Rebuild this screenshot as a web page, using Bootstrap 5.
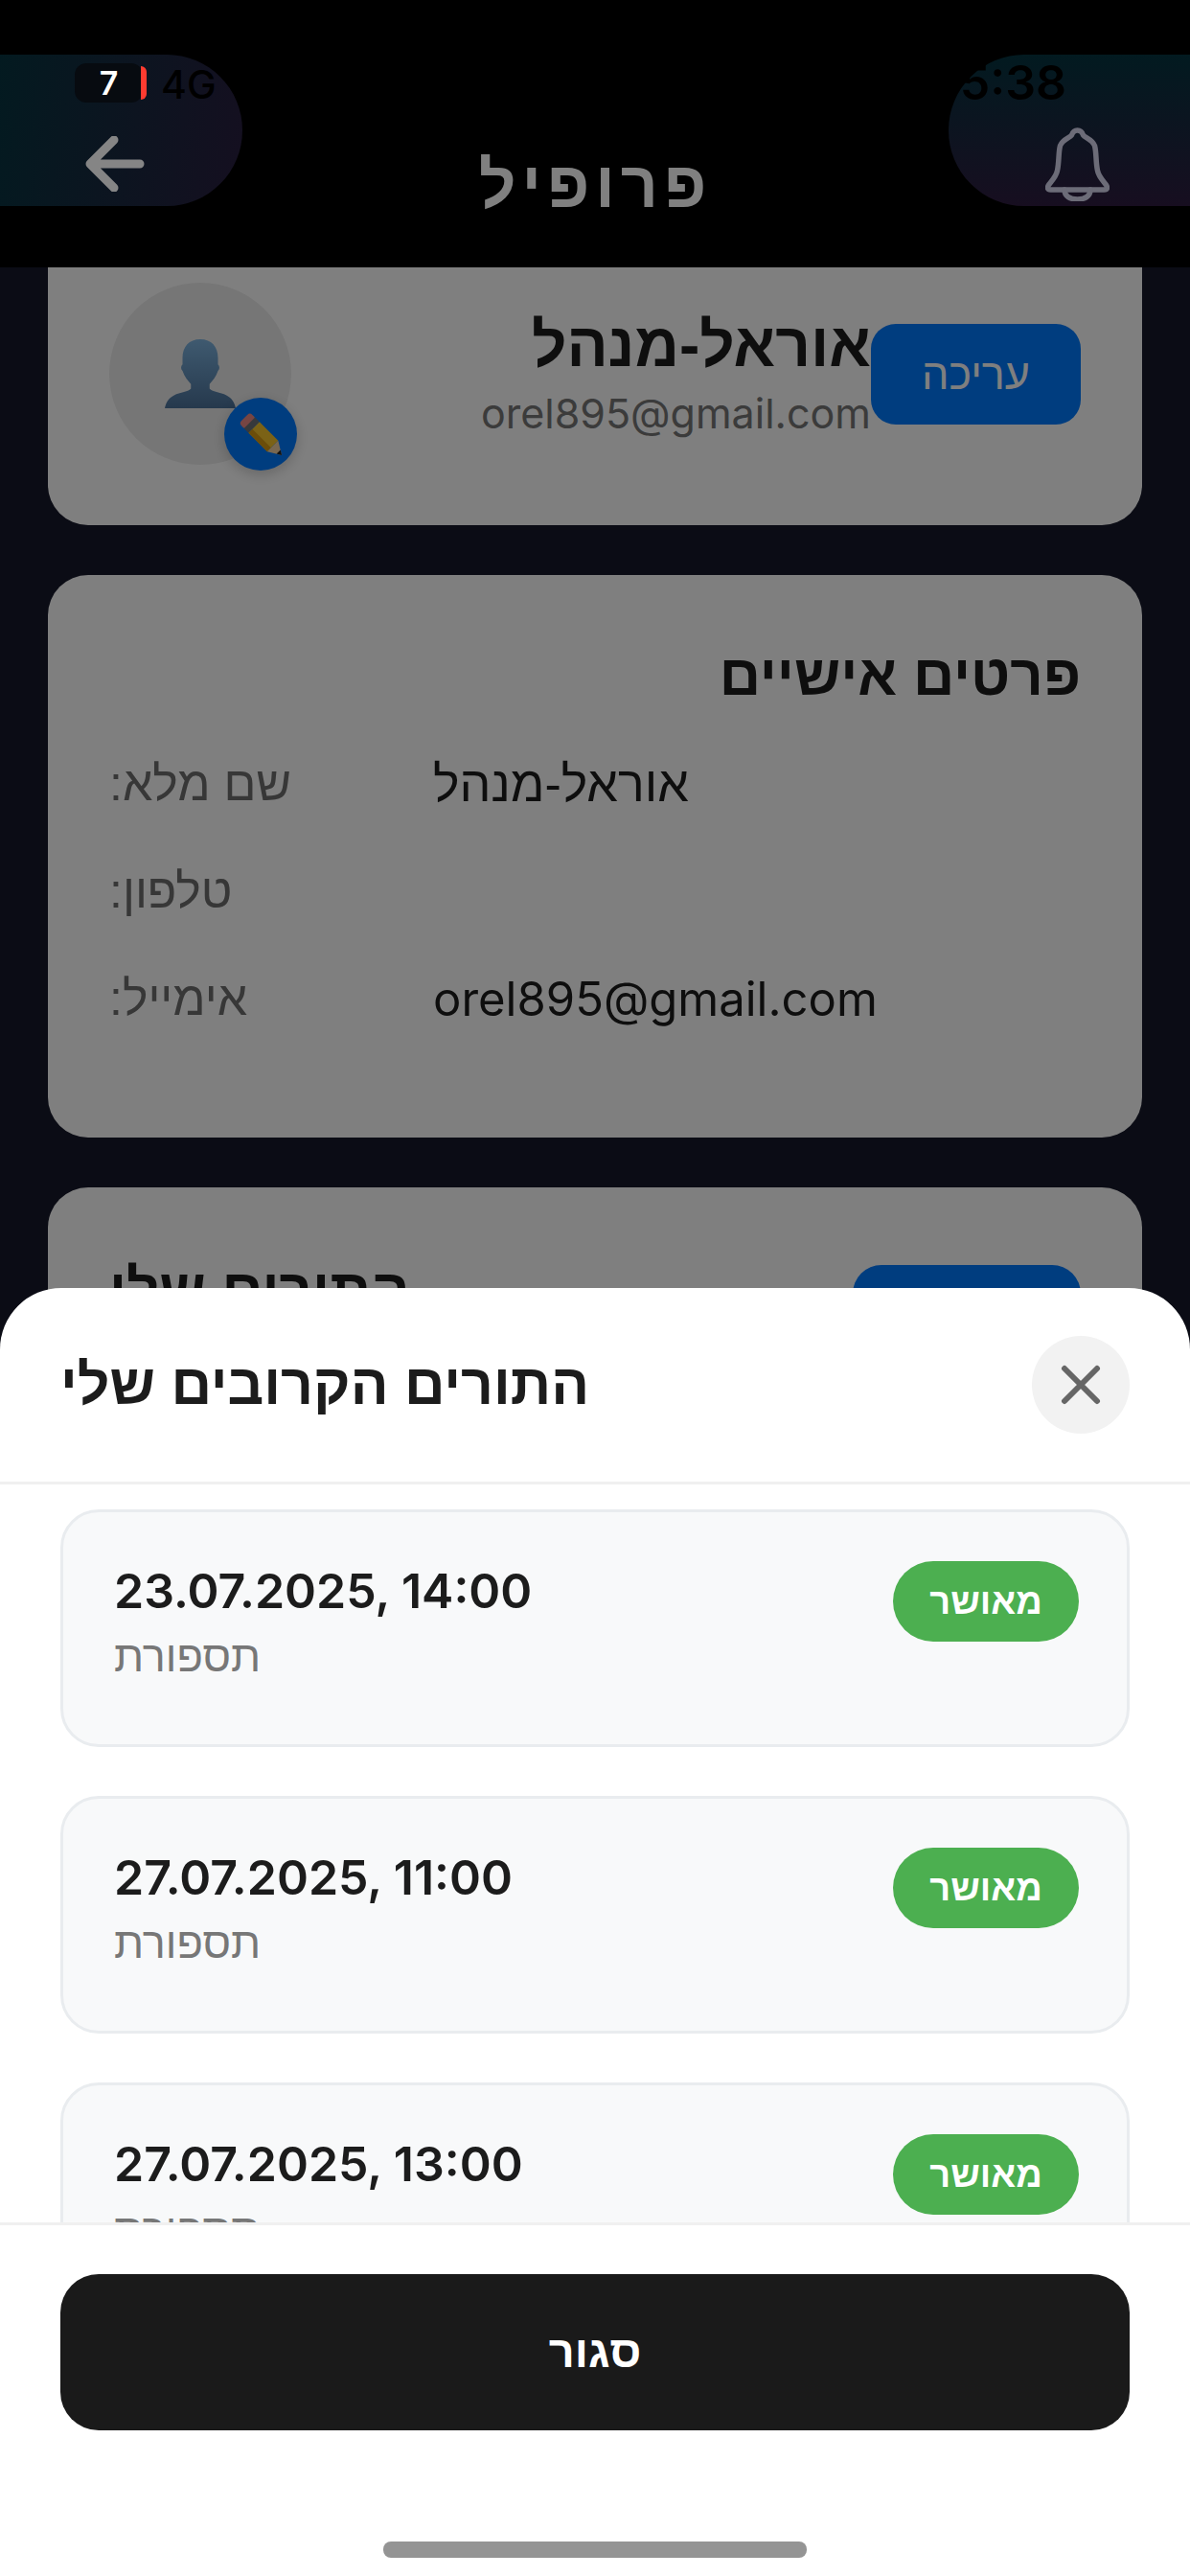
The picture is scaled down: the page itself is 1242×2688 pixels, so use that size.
<!DOCTYPE html>
<html lang="he" dir="rtl">
<head>
  <meta charset="UTF-8" />
  <title>פרופיל</title>
  <link href="https://cdn.jsdelivr.net/npm/bootstrap@5.3.3/dist/css/bootstrap.min.css" rel="stylesheet" />
  <style>
    html, body { margin: 0; height: 100%; }
    body {
      width: 1242px; height: 2688px; overflow: hidden;
      background: #16182a;
      font-family: "Liberation Sans", sans-serif;
      position: relative;
    }
    .latin-text { font-family: Inter, sans-serif; }
    /* top bar */
    .top-bar { height: 279px; background: #000; position: relative; z-index: 3; padding-top: 57px; }
    .top-pill { width: 253px; height: 158px; display: flex; align-items: center; padding-top: 70px; }
    .pill-right { background: linear-gradient(180deg, #021a20, #170e20); border-radius: 79px 0 0 79px; width: 252px; padding-right: 84px; }
    .pill-left { background: linear-gradient(100deg, #031a20, #150f20); border-radius: 0 79px 79px 0; padding-left: 89px; direction: ltr; }
    .top-title { color: #808080; font-size: 68px; font-weight: 700; letter-spacing: 6px; line-height: 1; margin-top: 101px; }
    .status-time, .status-net { position: absolute; color: #000; line-height: 1; direction: ltr; }
    .status-time { right: 129px; top: 61px; font-size: 50px; font-weight: 600; }
    .status-net { left: 168px; top: 68px; font-size: 41px; font-weight: 500; }
    .status-batt {
      position: absolute; left: 78px; top: 66px; width: 71px; height: 41px;
      border-radius: 12px; background: #070b10; color: #fff; font-size: 34px; font-weight: 600;
      display: flex; align-items: center; justify-content: center; direction: ltr;
    }
    .batt-red { position: absolute; left: 69px; top: 3px; width: 6px; height: 35px; background: #ff3b30; border-radius: 0 6px 6px 0; }
    /* page behind the sheet */
    .page-body { margin-top: -100px; padding: 0 50px; display: flex; flex-direction: column; gap: 52px; }
    .info-box { background: #fff; border-radius: 42px; padding: 64px; }
    .profile-box { height: 369px; padding-top: 116px; }
    .details-box { height: 587px; padding-top: 75px; }
    .details-box .box-title { margin-bottom: -4px; }
    .appts-box { height: 400px; padding-top: 81px; }
    .box-title { font-size: 60px; font-weight: 700; color: #1c1c1c; line-height: 1; }
    .edit-btn {
      width: 219px; height: 105px; margin-top: 43px; background: #007aff; color: #fff; border: 0; border-radius: 26px;
      font-size: 45px; flex-shrink: 0;
    }
    .user-block { margin-top: 33px; }
    .user-name { font-size: 64px; font-weight: 700; color: #1c1c1c; line-height: 1; }
    .user-mail { font-size: 43px; color: #777; line-height: 1; margin-top: 18px; }
    .avatar-wrap { position: relative; width: 190px; height: 190px; margin-right: auto; flex-shrink: 0; }
    .avatar-circle { width: 190px; height: 190px; border-radius: 50%; background: #ededed; display: flex; align-items: center; justify-content: center; }
    .avatar-badge {
      position: absolute; left: 120px; top: 120px; width: 76px; height: 76px; border-radius: 50%;
      background: #007aff; box-shadow: 0 4px 14px rgba(0,0,0,.2); display: flex; align-items: center; justify-content: center;
    }
    .detail-row { display: flex; direction: ltr; font-size: 50px; line-height: 49px; height: 49px; margin-top: 63px; }
    .detail-label { width: 338px; color: #6f6f6f; direction: rtl; text-align: left; }
    .detail-value { color: #1c1c1c; font-size: 52px; }
    .detail-value.latin-text { font-size: 49px; }
    .book-btn { width: 238px; height: 120px; background: #007aff; border-radius: 30px; }
    .appts-box .box-title { margin-top: -4px; }
    /* dim + sheet */
    .dim-layer { position: absolute; inset: 0; background: rgba(0,0,0,.5); z-index: 2; }
    .sheet {
      position: absolute; left: 0; right: 0; top: 1344px; bottom: 0; z-index: 4;
      background: #fff; border-radius: 64px 64px 0 0; display: flex; flex-direction: column;
    }
    .sheet-head { height: 205px; border-bottom: 3px solid #f0f0f0; padding: 0 63px; display: flex; align-items: center; justify-content: space-between; flex-shrink: 0; }
    .sheet-title { font-size: 59px; font-weight: 700; color: #1c1c1c; }
    .close-round { width: 102px; height: 102px; border: 0; border-radius: 50%; background: #f2f2f2; display: flex; align-items: center; justify-content: center; padding: 0; }
    .sheet-list { height: 770px; overflow: hidden; padding: 26px 63px 0; display: flex; flex-direction: column; gap: 51px; flex-shrink: 0; }
    .appt-item {
      flex-shrink: 0; height: 248px; background: #f8f9fa; border: 3px solid #e9ecef; border-radius: 40px;
      padding: 51px 50px 0 53px; display: flex; justify-content: space-between; align-items: flex-start;
    }
    .appt-status { width: 194px; height: 84px; border-radius: 42px; background: #4caf50; color: #fff; font-size: 38px; font-weight: 600; display: flex; align-items: center; justify-content: center; flex-shrink: 0; }
    .appt-date { font-size: 50px; font-weight: 600; color: #1c1c1c; line-height: 1.2; direction: ltr; text-align: left; margin-top: 1px; }
    .appt-kind { font-size: 45px; color: #777; text-align: left; margin-top: 14px; line-height: 1.1; }
    .sheet-foot { border-top: 3px solid #f0f0f0; padding: 51px 63px 0; flex-grow: 1; background: #fff; }
    .close-wide { width: 100%; height: 163px; border: 0; border-radius: 40px; background: #1a1a1a; color: #fff; font-size: 47px; font-weight: 700; }
    .home-bar { position: absolute; left: 400px; top: 1308px; width: 442px; height: 17px; border-radius: 8px; background: #949494; }
  </style>
</head>
<body>
  <div class="top-bar d-flex justify-content-between align-items-start">
    <div class="top-pill pill-right">
      <svg width="67" height="77" viewBox="0 0 67 77" fill="none" stroke="#6c6c78" stroke-width="5.5" stroke-linejoin="round" stroke-linecap="round">
        <path d="M33.500 3c-3 0-5 2-6 5-2 3-9 4-12 11-2 8-1 17-3 26-1 6-6 11-9 15-2 3-1 5 2 5h56c3 0 4-2 2-5-3-4-8-9-9-15-2-9-1-18-3-26-3-7-10-8-12-11-1-3-3-5-6-5z"/>
        <path d="M20 65c0 7 6 10 13.500 10s13.500-3 13.500-10"/>
      </svg>
    </div>
    <div class="top-title">פרופיל</div>
    <div class="top-pill pill-left">
      <svg width="62" height="58" viewBox="0 0 62 58" fill="none" stroke="#858585" stroke-width="9" stroke-linecap="round" stroke-linejoin="round">
        <path d="M57 29H5M30 4 5 29l25 25"/>
      </svg>
    </div>
    <div class="status-batt latin-text">7<span class="batt-red"></span></div>
    <div class="status-net latin-text">4G</div>
    <div class="status-time latin-text">5:38</div>
  </div>

  <div class="page-body">
    <div class="info-box profile-box d-flex align-items-start">
      <button class="edit-btn">עריכה</button>
      <div class="user-block">
        <div class="user-name">אוראל-מנהל</div>
        <div class="user-mail latin-text">orel895@gmail.com</div>
      </div>
      <div class="avatar-wrap">
        <div class="avatar-circle">
          <svg width="74" height="74" viewBox="0 0 76 74"><defs><linearGradient id="bust" x1="0" y1="0" x2="0" y2="1"><stop offset="0" stop-color="#7eb4e0"/><stop offset="1" stop-color="#4c729a"/></linearGradient></defs><path fill="url(#bust)" d="M38 0c-12 0-19 8-19 20v7c-2 2-2 5 0 7 2 6 6 11 9 14v5c-2 3-12 4-18 7-6 3-9 8-10 14h76c-1-6-4-11-10-14-6-3-16-4-18-7v-5c3-3 7-8 9-14 2-2 2-5 0-7v-7C57 8 50 0 38 0z"/></svg>
        </div>
        <div class="avatar-badge">
          <svg width="46" height="46" viewBox="0 0 46 46">
            <g transform="translate(6.400 5.600) rotate(45) scale(.95)">
              <rect x="0" y="-8" width="10" height="17" rx="4" fill="#ec8a86"/>
              <rect x="8" y="-8" width="7" height="17" fill="#6e7278"/>
              <rect x="15" y="-8" width="29" height="17" fill="#f7c52d"/>
              <rect x="15" y="3" width="29" height="6" fill="#d69a14"/>
              <path d="M44-8 58 .5 44 9z" fill="#f0cfa0"/>
              <path d="M53-2.500 58 .5 53 3.500z" fill="#222"/>
            </g>
          </svg>
        </div>
      </div>
    </div>

    <div class="info-box details-box">
      <div class="box-title">פרטים אישיים</div>
      <div class="detail-row"><div class="detail-label">שם מלא:</div><div class="detail-value">אוראל-מנהל</div></div>
      <div class="detail-row"><div class="detail-label">טלפון:</div><div class="detail-value"></div></div>
      <div class="detail-row"><div class="detail-label">אימייל:</div><div class="detail-value latin-text">orel895@gmail.com</div></div>
    </div>

    <div class="info-box appts-box d-flex justify-content-between align-items-start">
      <div class="book-btn"></div>
      <div class="box-title">התורים שלי</div>
    </div>
  </div>

  <div class="dim-layer"></div>

  <div class="sheet">
    <div class="sheet-head">
      <button class="close-round" aria-label="סגור">
        <svg width="42" height="42" viewBox="0 0 42 42" stroke="#666" stroke-width="6" stroke-linecap="round"><path d="M4 4l34 34M38 4 4 38"/></svg>
      </button>
      <div class="sheet-title">התורים הקרובים שלי</div>
    </div>
    <div class="sheet-list">
      <div class="appt-item"><div class="appt-status">מאושר</div><div><div class="appt-date latin-text">23.07.2025, 14:00</div><div class="appt-kind">תספורת</div></div></div>
      <div class="appt-item"><div class="appt-status">מאושר</div><div><div class="appt-date latin-text">27.07.2025, 11:00</div><div class="appt-kind">תספורת</div></div></div>
      <div class="appt-item"><div class="appt-status">מאושר</div><div><div class="appt-date latin-text">27.07.2025, 13:00</div><div class="appt-kind">תספורת</div></div></div>
    </div>
    <div class="sheet-foot"><button class="close-wide">סגור</button></div>
    <div class="home-bar"></div>
  </div>
</body>
</html>
